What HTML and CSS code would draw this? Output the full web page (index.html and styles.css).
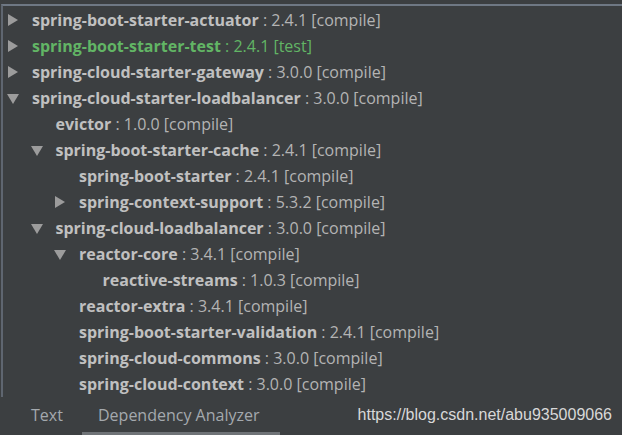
FILE: index.html
```html
<!DOCTYPE html>
<html>
<head>
<meta charset="utf-8">
<link rel="stylesheet" href="styles.css">
</head>
<body>
<div class="panel">
  <div class="tree">
    <div class="row l0"><span class="arrow right"></span><span class="text"><b class="name">spring-boot-starter-actuator</b> : 2.4.1 [compile]</span></div>
    <div class="row l0 test"><span class="arrow right"></span><span class="text"><b class="name">spring-boot-starter-test</b> : 2.4.1 [test]</span></div>
    <div class="row l0"><span class="arrow right"></span><span class="text"><b class="name">spring-cloud-starter-gateway</b> : 3.0.0 [compile]</span></div>
    <div class="row l0"><span class="arrow down"></span><span class="text"><b class="name">spring-cloud-starter-loadbalancer</b> : 3.0.0 [compile]</span></div>
    <div class="row l1"><span class="arrow none"></span><span class="text"><b class="name">evictor</b> : 1.0.0 [compile]</span></div>
    <div class="row l1"><span class="arrow down"></span><span class="text"><b class="name">spring-boot-starter-cache</b> : 2.4.1 [compile]</span></div>
    <div class="row l2"><span class="arrow none"></span><span class="text"><b class="name">spring-boot-starter</b> : 2.4.1 [compile]</span></div>
    <div class="row l2"><span class="arrow right"></span><span class="text"><b class="name">spring-context-support</b> : 5.3.2 [compile]</span></div>
    <div class="row l1"><span class="arrow down"></span><span class="text"><b class="name">spring-cloud-loadbalancer</b> : 3.0.0 [compile]</span></div>
    <div class="row l2"><span class="arrow down"></span><span class="text"><b class="name">reactor-core</b> : 3.4.1 [compile]</span></div>
    <div class="row l3"><span class="arrow none"></span><span class="text"><b class="name">reactive-streams</b> : 1.0.3 [compile]</span></div>
    <div class="row l2"><span class="arrow none"></span><span class="text"><b class="name">reactor-extra</b> : 3.4.1 [compile]</span></div>
    <div class="row l2"><span class="arrow none"></span><span class="text"><b class="name">spring-boot-starter-validation</b> : 2.4.1 [compile]</span></div>
    <div class="row l2"><span class="arrow none"></span><span class="text"><b class="name">spring-cloud-commons</b> : 3.0.0 [compile]</span></div>
    <div class="row l2"><span class="arrow none"></span><span class="text"><b class="name">spring-cloud-context</b> : 3.0.0 [compile]</span></div>
  </div>
  <div class="tabs">
    <div class="tab first">Text</div>
    <div class="tab active">Dependency Analyzer</div>
    <div class="watermark">https://blog.csdn.net/abu935009066</div>
  </div>
</div>
</body>
</html>
```
FILE: styles.css
```css
html, body {
  margin: 0;
  padding: 0;
  background: #3c3f41;
}
.panel {
  width: 622px;
  height: 435px;
  overflow: hidden;
  background: #3c3f41;
  display: flex;
  flex-direction: column;
  padding-top: 4px;
  box-sizing: border-box;
}
.tree {
  height: 393px;
  border-top: 2px solid #6f7884;
  border-left: 2px solid #5f6670;
  margin-left: 1px;
  padding-top: 1px;
  box-sizing: border-box;
  overflow: hidden;
}
.row {
  height: 26px;
  display: flex;
  align-items: center;
  font-family: "Open Sans", "Noto Sans", sans-serif;
  font-size: 16px;
  color: #b4b4b4;
  white-space: nowrap;
}
.l0 { padding-left: 1px; }
.l1 { padding-left: 24.5px; }
.l2 { padding-left: 48px; }
.l3 { padding-left: 71.5px; }
.arrow {
  width: 28px;
  height: 26px;
  flex: none;
  position: relative;
}
.arrow.right::before {
  content: "";
  position: absolute;
  left: 4px;
  top: 7px;
  border-style: solid;
  border-width: 6px 0 6px 10px;
  border-color: transparent transparent transparent #9c9c9c;
}
.arrow.down::before {
  content: "";
  position: absolute;
  left: 3px;
  top: 9px;
  border-style: solid;
  border-width: 10px 6px 0 6px;
  border-color: #9c9c9c transparent transparent transparent;
}
.text {
  white-space: pre;
}
.name {
  font-weight: 700;
  color: #c0c0c0;
}
.test .text, .test .name {
  color: #62b565;
}
.tabs {
  flex: 1;
  display: flex;
  align-items: stretch;
  font-family: "Open Sans", "Noto Sans", sans-serif;
  font-size: 16px;
  color: #a4a9ae;
}
.tab {
  display: flex;
  align-items: center;
  border-bottom: 3px solid transparent;
}
.tab.first {
  width: 82px;
  padding-left: 31px;
  box-sizing: border-box;
}
.tab.active {
  border-bottom-color: #6f7377;
  width: 198px;
  padding-left: 16px;
  box-sizing: border-box;
}
.watermark {
  margin-left: auto;
  margin-right: 10px;
  display: flex;
  align-items: center;
  padding-bottom: 3px;
  font-family: "Liberation Sans", Arial, sans-serif;
  font-size: 16px;
  color: #d8d8d8;
}
```
